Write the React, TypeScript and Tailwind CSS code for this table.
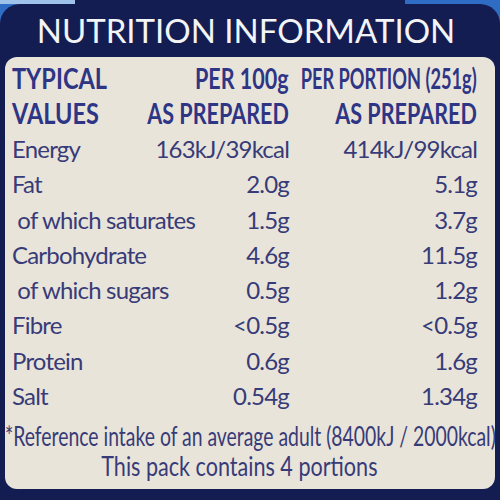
import React from "react"

type Row = { label: string; per100: string; portion: string }

const rows: Row[] = [
  { label: "Energy", per100: "163kJ/39kcal", portion: "414kJ/99kcal" },
  { label: "Fat", per100: "2.0g", portion: "5.1g" },
  { label: " of which saturates", per100: "1.5g", portion: "3.7g" },
  { label: "Carbohydrate", per100: "4.6g", portion: "11.5g" },
  { label: " of which sugars", per100: "0.5g", portion: "1.2g" },
  { label: "Fibre", per100: "<0.5g", portion: "<0.5g" },
  { label: "Protein", per100: "0.6g", portion: "1.6g" },
  { label: "Salt", per100: "0.54g", portion: "1.34g" },
]

// condensed bold heading cell
function Head({ text, right, squeeze }: { text: string; right?: boolean; squeeze?: boolean }) {
  const scale = squeeze ? "scale-x-[0.65]" : right ? "scale-x-[0.77]" : "scale-x-[0.84]"
  return (
    <div className={right ? "flex justify-end whitespace-nowrap" : "flex justify-start whitespace-nowrap"}>
      <span className={`shrink-0 ${scale} ${right ? "origin-right" : "origin-left"}`}>{text}</span>
    </div>
  )
}

export default function App() {
  return (
    <div className="w-[500px] h-[500px] bg-[#2f6cc4] overflow-hidden">
      <div className="flex h-[4px]">
        <div className="w-[75px] bg-[#9fc2ea]" />
        <div className="w-[330px] bg-[#141d52]" />
      </div>
      <div className="h-[500px] bg-[#141d52] rounded-t-[20px] flex flex-col">
        {/* title */}
        <div className="h-[53px] flex items-center justify-center text-[#f3f4f6] font-['Lato',sans-serif] text-[33px] leading-none pr-[8px]">
          NUTRITION INFORMATION
        </div>

        {/* label panel */}
        <div className="mx-[5px] w-[490px] h-[432px] bg-[#e9e4da] rounded-[12px] pl-[7px] pr-[18px] pt-[4px] text-[#373b78] font-['Lato',sans-serif]">
          <div className="grid grid-cols-[140px_137px_188px] font-bold text-[#2e3585] text-[28px] leading-[35px]">
            <Head text="TYPICAL" />
            <Head text="PER 100g" right />
            <Head text="PER PORTION (251g)" right squeeze />
            <Head text="VALUES" />
            <Head text="AS PREPARED" right />
            <Head text="AS PREPARED" right />
          </div>

          <div className="grid grid-cols-[140px_137px_188px] text-[24px] leading-[35.3px] tracking-[-0.8px]">
            {rows.map((r) => (
              <React.Fragment key={r.label}>
                <div className="whitespace-pre">{r.label}</div>
                <div className="text-right">{r.per100}</div>
                <div className="text-right">{r.portion}</div>
              </React.Fragment>
            ))}
          </div>

          <div className="-ml-[4px] -mr-[16px] text-[26px] leading-[30px] mt-[8px]">
            <div className="flex justify-center whitespace-nowrap">
              <span className="shrink-0 scale-x-[0.745]">
                *Reference intake of an average adult (8400kJ / 2000kcal)
              </span>
            </div>
            <div className="flex justify-center whitespace-nowrap pr-[22px]">
              <span className="shrink-0 scale-x-[0.83]">This pack contains 4 portions</span>
            </div>
          </div>
        </div>
      </div>
    </div>
  )
}
